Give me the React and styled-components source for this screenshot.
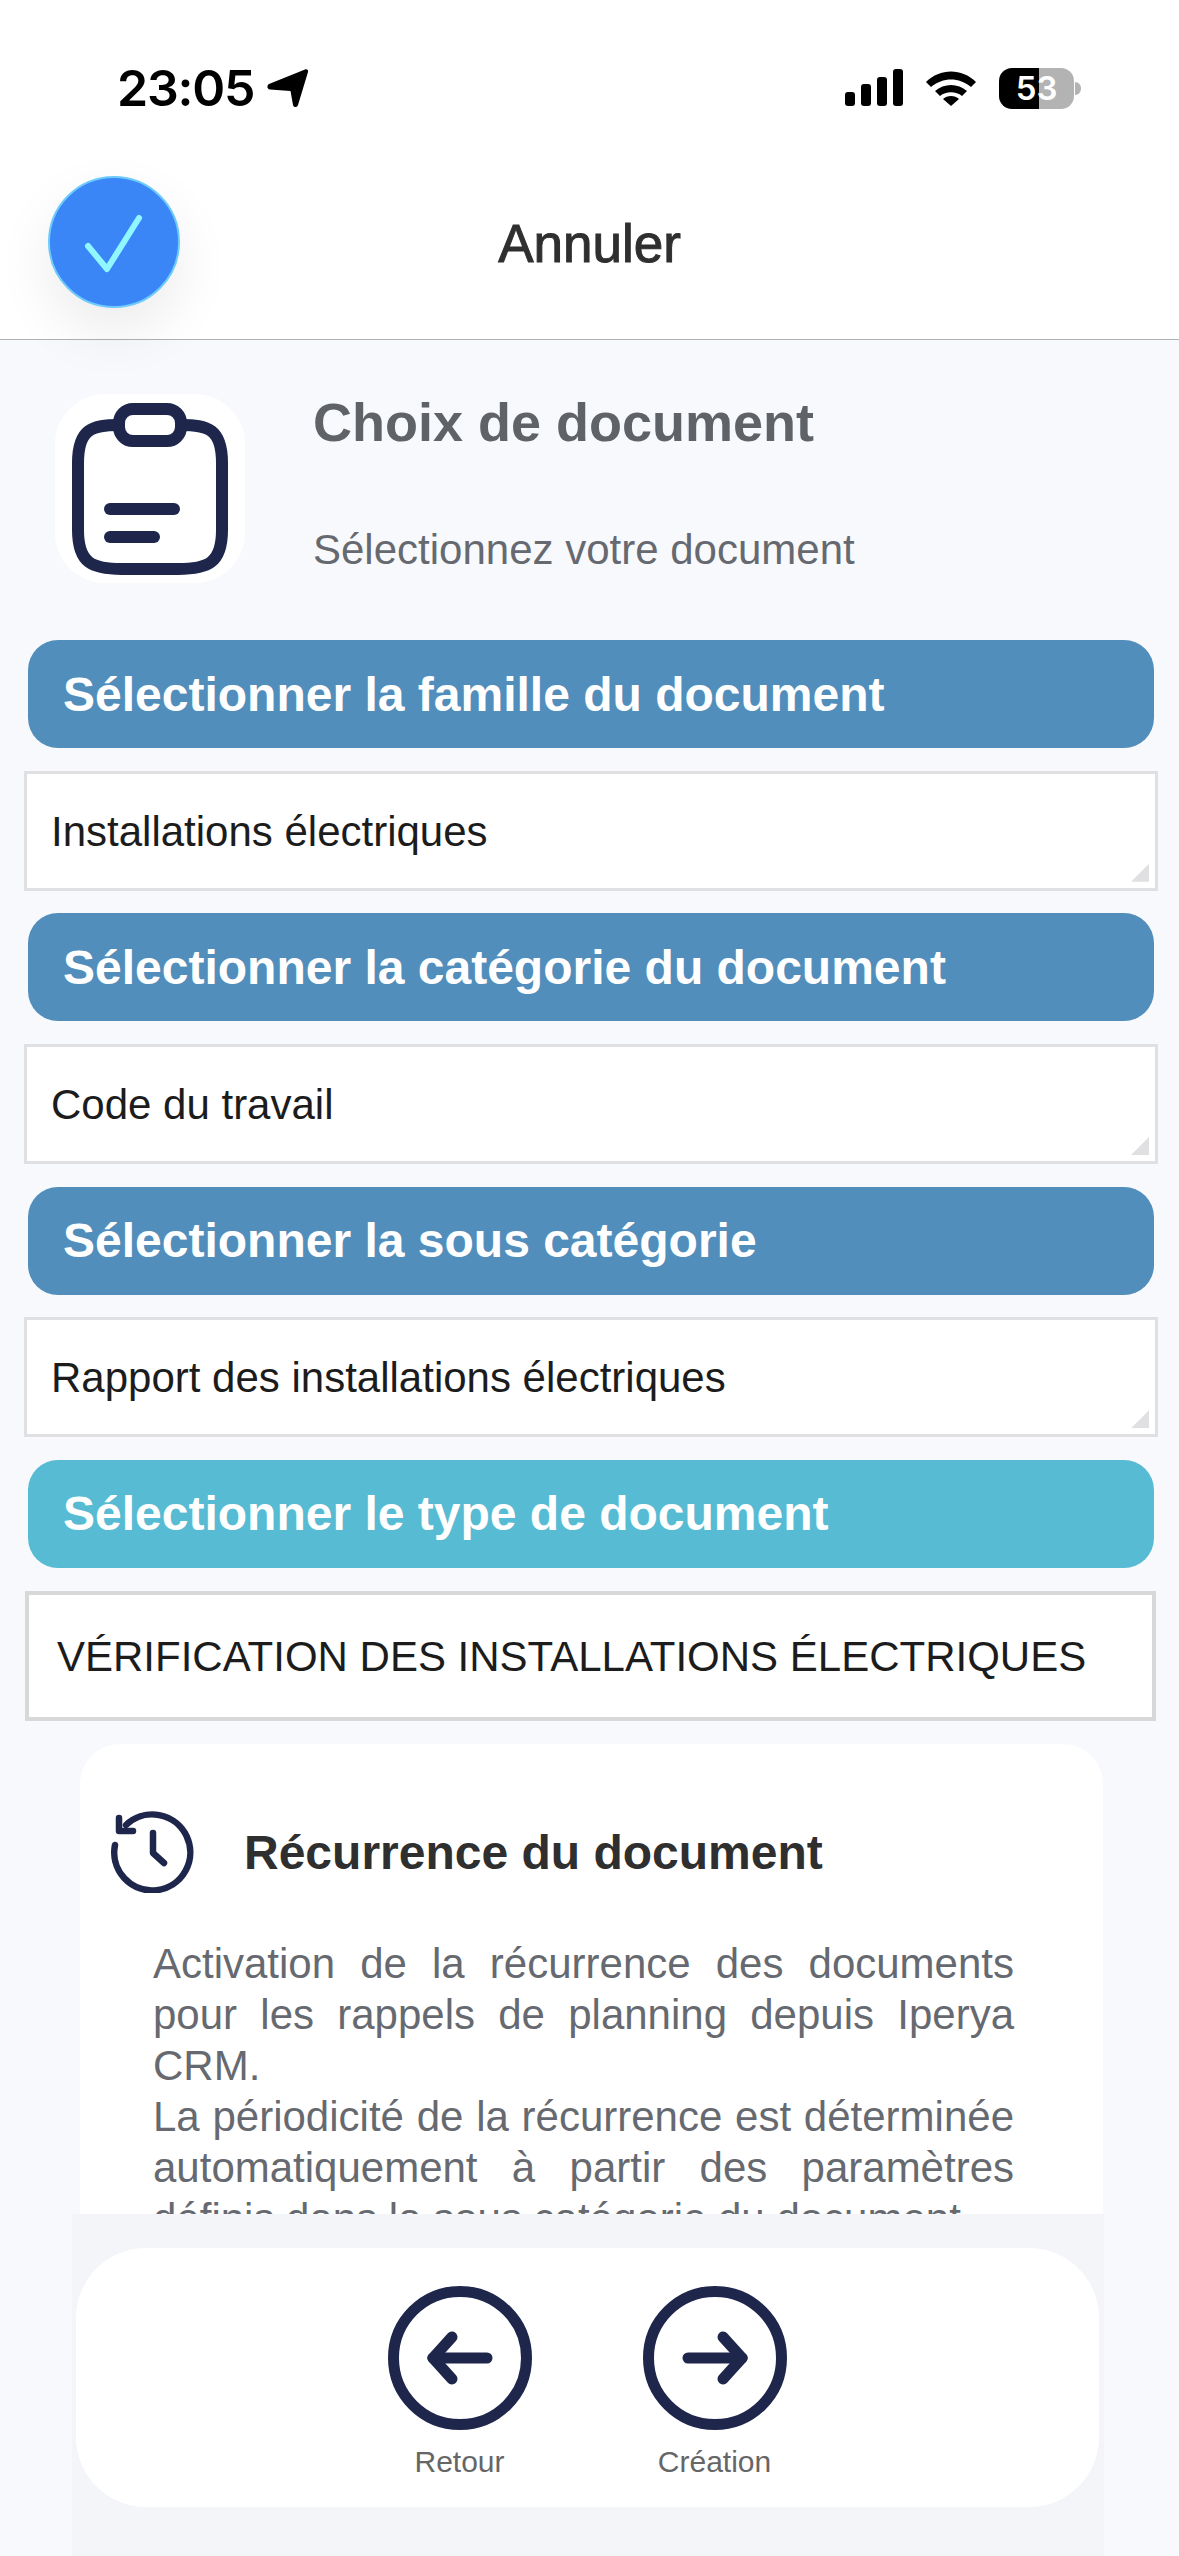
import React from 'react'
import styled, { createGlobalStyle } from 'styled-components'

const GlobalStyle = createGlobalStyle`
  html, body {
    margin: 0;
    padding: 0;
    background: #f8f9fd;
  }
  * {
    box-sizing: border-box;
  }
`

const fields = [
  { id: 'famille', label: 'Sélectionner la famille du document', value: 'Installations électriques' },
  { id: 'categorie', label: 'Sélectionner la catégorie du document', value: 'Code du travail' },
  { id: 'sous', label: 'Sélectionner la sous catégorie', value: 'Rapport des installations électriques' },
]

const LocationIcon = () => (
  <svg width="42" height="40" viewBox="0 0 42 40">
    <path d="M38 1.5 C40 0.5 41.5 2 41 4 L31 37 C30 40 26.5 39.5 26 37 L23.5 23 L3 21.5 C0 21 -0.5 17.5 2 16 Z" fill="#000" />
  </svg>
)

const SignalIcon = () => (
  <svg width="58" height="38" viewBox="0 0 58 38">
    <rect x="0" y="23" width="10" height="14" rx="3" fill="#000" />
    <rect x="16" y="15" width="10" height="22" rx="3" fill="#000" />
    <rect x="32" y="8" width="10" height="29" rx="3" fill="#000" />
    <rect x="48" y="0" width="10" height="37" rx="3" fill="#000" />
  </svg>
)

const WifiIcon = () => (
  <svg width="52" height="38" viewBox="0 0 52 38">
    <path d="M1 13 C15 -1 37 -1 51 13 L46 18 C34 8 18 8 6 18 Z" fill="#000" />
    <path d="M10 22 C19 14 33 14 42 22 L37 27 C31 22 21 22 15 27 Z" fill="#000" />
    <path d="M18 30 C22 26 30 26 34 30 L26 37 Z" fill="#000" />
  </svg>
)

const CheckIcon = () => (
  <svg width="128" height="128" viewBox="0 0 128 128">
    <path d="M38 68 L57 91 L89 40" fill="none" stroke="#90f6ff" strokeWidth="6" strokeLinecap="round" strokeLinejoin="round" />
  </svg>
)

const ClipboardIcon = () => (
  <svg width="156" height="172" viewBox="0 0 156 172">
    <g fill="none" stroke="#1e274b" strokeWidth="12" strokeLinecap="round">
      <path d="M47 22 C20 22 6 26 6 60 V127 C6 160 20 166 50 166 H106 C136 166 150 160 150 127 V60 C150 26 136 22 109 22" />
      <rect x="47" y="6" width="62" height="32" rx="14" />
      <path d="M38 106 H102" />
      <path d="M38 134 H82" />
    </g>
  </svg>
)

const ClockIcon = () => (
  <svg width="84" height="84" viewBox="0 0 84 84">
    <g fill="none" stroke="#1e274b" strokeWidth="6.5" strokeLinecap="round" strokeLinejoin="round">
      <path d="M4 36 A38 38 0 1 0 15 16" />
      <path d="M8 9 V22 H22" />
      <path d="M42 24 V44 L53 54" />
    </g>
  </svg>
)

const ArrowIcon = ({ right }) => (
  <svg width="144" height="144" viewBox="0 0 144 144">
    <circle cx="72" cy="72" r="66.5" fill="none" stroke="#1e274b" strokeWidth="11" />
    <g
      fill="none"
      stroke="#1e274b"
      strokeWidth="11"
      strokeLinecap="round"
      strokeLinejoin="round"
      transform={right ? 'rotate(180 72 72)' : undefined}
    >
      <path d="M45 72 H99" />
      <path d="M64 51 L45 72 L64 93" />
    </g>
  </svg>
)

const App = () => {
  return (
    <Screen>
      <GlobalStyle />
      <Header>
        <StatusBar>
          <TimeGroup>
            <Time>23:05</Time>
            <LocationIcon />
          </TimeGroup>
          <StatusIcons>
            <SignalIcon />
            <WifiIcon />
            <Battery>53</Battery>
          </StatusIcons>
        </StatusBar>
        <NavBar>
          <ConfirmButton>
            <CheckIcon />
          </ConfirmButton>
          <CancelLabel>Annuler</CancelLabel>
        </NavBar>
      </Header>

      <Content>
        <Intro>
          <IconTile>
            <ClipboardIcon />
          </IconTile>
          <IntroText>
            <IntroTitle>Choix de document</IntroTitle>
            <IntroSubtitle>Sélectionnez votre document</IntroSubtitle>
          </IntroText>
        </Intro>

        <Form>
          {fields.map(f => (
            <React.Fragment key={f.id}>
              <Band>{f.label}</Band>
              <Field>{f.value}</Field>
            </React.Fragment>
          ))}
          <Band $active>Sélectionner le type de document</Band>
          <TypeField>VÉRIFICATION DES INSTALLATIONS ÉLECTRIQUES</TypeField>
          <InfoCard>
            <InfoHead>
              <ClockIcon />
              <InfoTitle>Récurrence du document</InfoTitle>
            </InfoHead>
            <InfoText>
              Activation de la récurrence des documents pour les rappels de planning depuis Iperya CRM.
            </InfoText>
            <InfoText>
              La périodicité de la récurrence est déterminée automatiquement à partir des paramètres
              définis dans la sous catégorie du document.
            </InfoText>
          </InfoCard>
        </Form>
      </Content>

      <Footer>
        <FooterCard>
          <FooterAction>
            <ArrowIcon />
            <FooterLabel>Retour</FooterLabel>
          </FooterAction>
          <FooterAction>
            <ArrowIcon right />
            <FooterLabel>Création</FooterLabel>
          </FooterAction>
        </FooterCard>
      </Footer>
    </Screen>
  )
}

const Screen = styled.div`
  position: relative;
  width: 1179px;
  height: 2556px;
  overflow: hidden;
  background: #f8f9fd;
  font-family: 'Liberation Sans', Arial, sans-serif;
`

const Header = styled.header`
  position: relative;
  z-index: 1;
  height: 340px;
  background: #fff;
  border-bottom: 1px solid #b2b2b4;
`

const StatusBar = styled.div`
  display: flex;
  justify-content: space-between;
  align-items: center;
  height: 176px;
  padding: 0 105px 0 117px;
`

const TimeGroup = styled.div`
  display: flex;
  align-items: center;
  gap: 13px;
`

const Time = styled.span`
  font-family: Inter, 'Liberation Sans', sans-serif;
  font-size: 50px;
  font-weight: 600;
  letter-spacing: -1.2px;
  color: #000;
`

const StatusIcons = styled.div`
  display: flex;
  align-items: center;
  gap: 22px;
`

const Battery = styled.div`
  position: relative;
  display: flex;
  align-items: center;
  justify-content: center;
  width: 75px;
  height: 41px;
  border-radius: 13px;
  background: linear-gradient(to right, #000 0 40px, #b3b3b3 40px 100%);
  color: #fff;
  font-family: Inter, 'Liberation Sans', sans-serif;
  font-size: 33px;
  font-weight: 600;

  &::after {
    content: '';
    position: absolute;
    right: -7px;
    top: 14px;
    width: 6px;
    height: 13px;
    border-radius: 0 6px 6px 0;
    background: #b3b3b3;
  }
`

const NavBar = styled.nav`
  display: grid;
  grid-template-columns: 1fr auto 1fr;
  align-items: start;
  padding-left: 48px;
`

const ConfirmButton = styled.button`
  display: flex;
  align-items: center;
  justify-content: center;
  width: 132px;
  height: 132px;
  padding: 0;
  border: 2px solid #6dcbfc;
  border-radius: 50%;
  background: #3b86f7;
  box-shadow: 0 24px 56px rgba(0, 0, 0, 0.08);
`

const CancelLabel = styled.span`
  margin: 38px 0 0 -48px;
  font-size: 53px;
  line-height: 60px;
  color: #2f2f2f;
  -webkit-text-stroke: 1px #2f2f2f;
`

const Content = styled.main`
  display: flex;
  flex-direction: column;
`

const Intro = styled.section`
  display: flex;
  height: 300px;
  padding: 51px 0 0 55px;
`

const IconTile = styled.div`
  display: flex;
  align-items: center;
  justify-content: center;
  width: 190px;
  height: 189px;
  margin-top: 3px;
  border-radius: 50px;
  background: #fff;
`

const IntroText = styled.div`
  display: flex;
  flex-direction: column;
  margin-left: 68px;
`

const IntroTitle = styled.h1`
  margin: 0;
  font-size: 54px;
  line-height: 62px;
  font-weight: 700;
  color: #5f6368;
`

const IntroSubtitle = styled.p`
  margin: 73px 0 0;
  font-size: 42px;
  line-height: 48px;
  color: #666a70;
`

const Form = styled.div`
  display: flex;
  flex-direction: column;
  gap: 22.67px;
`

const Band = styled.div`
  display: flex;
  align-items: center;
  height: 108px;
  margin: 0 25px 0 28px;
  padding: 0 35px;
  border-radius: 30px;
  background: ${({ $active }) => ($active ? '#56bbd3' : '#528ebc')};
  color: #fff;
  font-size: 48px;
  font-weight: 700;
`

const Field = styled.div`
  position: relative;
  display: flex;
  align-items: center;
  height: 120px;
  margin: 0 21px 0 24px;
  padding: 2px 24px 0;
  border: 3px solid #e0e0e2;
  background: #fff;
  color: #1c1c1c;
  font-size: 42px;

  &::after {
    content: '';
    position: absolute;
    right: 6px;
    bottom: 6px;
    width: 18px;
    height: 18px;
    background: #e0e0e2;
    clip-path: polygon(100% 0, 100% 100%, 0 100%);
  }
`

const TypeField = styled.div`
  display: flex;
  align-items: center;
  height: 130px;
  margin: 0 23px 0 25px;
  padding: 2px 28px 0;
  border: 4px solid #d8d8d8;
  background: #fff;
  color: #1c1c1c;
  font-size: 42px;
  white-space: nowrap;
`

const InfoCard = styled.article`
  min-height: 600px;
  margin: 1px 76px 0 80px;
  padding: 65px 89px 0 31px;
  border-radius: 40px;
  background: #fff;
`

const InfoHead = styled.div`
  display: flex;
  align-items: center;
  gap: 49px;
  margin-bottom: 45px;
`

const InfoTitle = styled.h2`
  margin: 3px 0 0;
  font-size: 48px;
  font-weight: 700;
  color: #2f2f2f;
`

const InfoText = styled.p`
  margin: 0 0 0 42px;
  font-size: 42px;
  line-height: 51px;
  color: #666a70;
  text-align: justify;
`

const Footer = styled.footer`
  position: absolute;
  left: 72px;
  bottom: 0;
  width: 1032px;
  height: 342px;
  padding: 34px 5px 0 4px;
  background: #f4f5f9;
`

const FooterCard = styled.div`
  display: flex;
  justify-content: center;
  gap: 111px;
  height: 259px;
  padding: 38px 1px 0 0;
  border-radius: 70px;
  background: #fff;
`

const FooterAction = styled.div`
  display: flex;
  flex-direction: column;
  align-items: center;
  width: 144px;
`

const FooterLabel = styled.span`
  margin-top: 14px;
  font-size: 30px;
  line-height: 36px;
  color: #666;
`

export default App
